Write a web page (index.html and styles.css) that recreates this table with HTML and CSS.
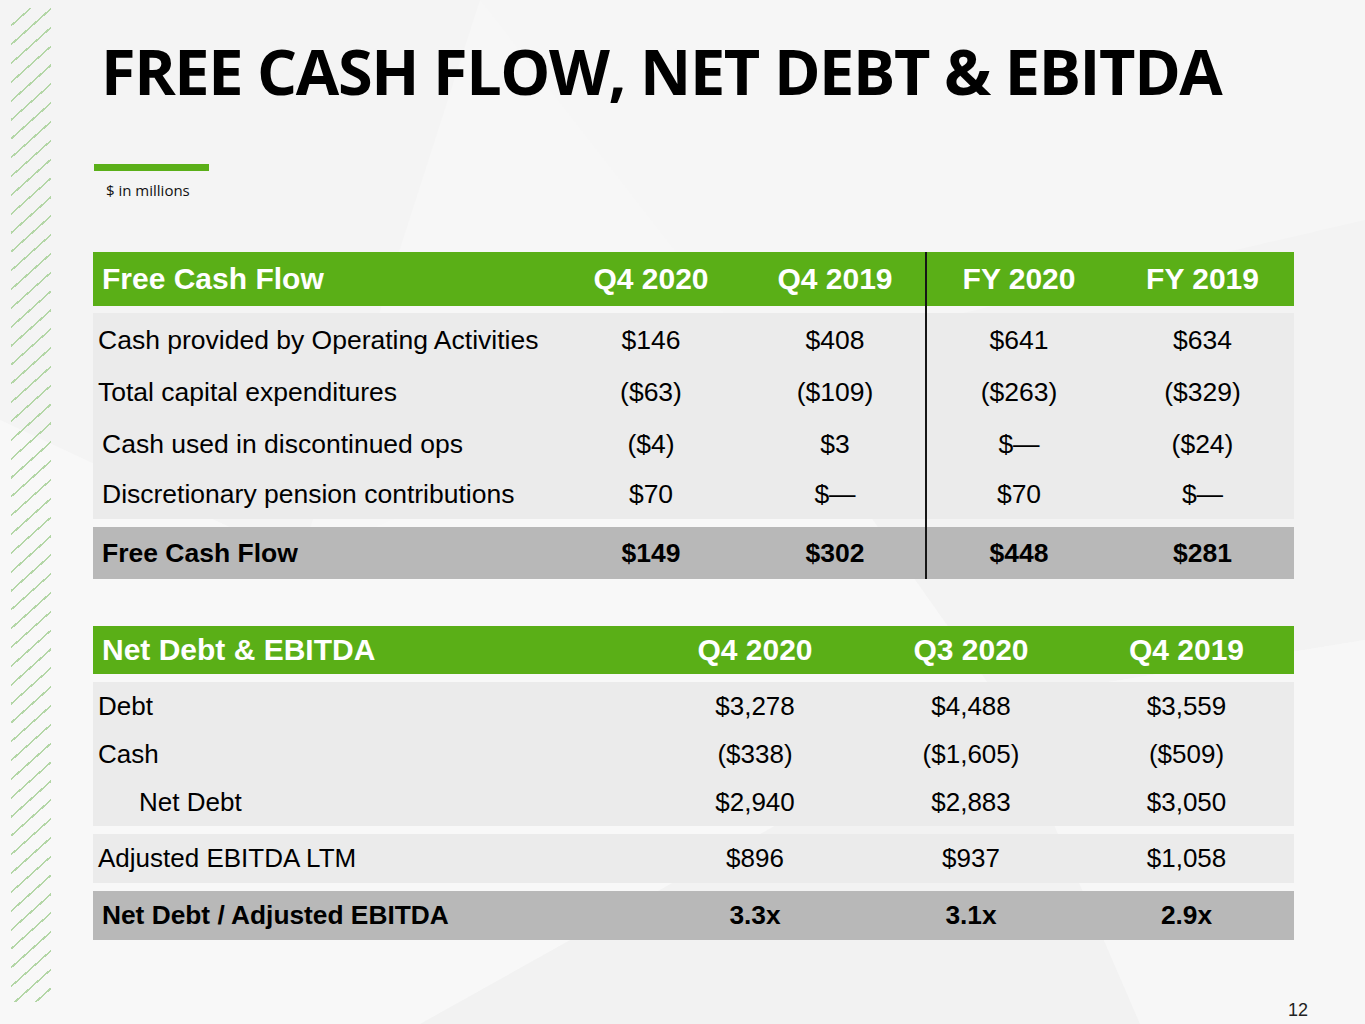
FILE: index.html
```html
<!DOCTYPE html>
<html lang="en">
<head>
<meta charset="utf-8">
<title>Free Cash Flow, Net Debt &amp; EBITDA</title>
<link rel="stylesheet" href="styles.css">
</head>
<body>
<div class="slide">
  <svg class="bg" width="1365" height="1024" viewBox="0 0 1365 1024" aria-hidden="true">
    <polygon points="0,0 480,0 300,560 0,420" fill="#f4f4f4"/>
    <polygon points="480,0 1365,0 1365,220 760,360" fill="#f6f6f6"/>
    <polygon points="300,560 760,360 1000,700 420,1024 0,1024 0,420" fill="#f8f8f8"/>
    <polygon points="760,360 1365,220 1365,640 1000,700" fill="#f3f3f3"/>
    <polygon points="1000,700 1365,640 1365,1024 1140,1024" fill="#f7f7f7"/>
    <polygon points="420,1024 1000,700 1140,1024" fill="#f2f2f2"/>
  </svg>
  <div class="stripes"></div>

  <div class="content">
    <h1 class="title">FREE CASH FLOW, NET DEBT &amp; EBITDA</h1>
    <div class="rule"></div>
    <p class="note">$ in millions</p>

    <div class="table fcf">
      <div class="divider"></div>
      <div class="row head">
        <div class="lbl">Free Cash Flow</div>
        <div class="num">Q4 2020</div>
        <div class="num">Q4 2019</div>
        <div class="num">FY 2020</div>
        <div class="num">FY 2019</div>
      </div>
      <div class="block body">
        <div class="row">
          <div class="lbl">Cash provided by Operating Activities</div>
          <div class="num">$146</div><div class="num">$408</div><div class="num">$641</div><div class="num">$634</div>
        </div>
        <div class="row">
          <div class="lbl">Total capital expenditures</div>
          <div class="num">($63)</div><div class="num">($109)</div><div class="num">($263)</div><div class="num">($329)</div>
        </div>
        <div class="row">
          <div class="lbl ind1">Cash used in discontinued ops</div>
          <div class="num">($4)</div><div class="num">$3</div><div class="num">$—</div><div class="num">($24)</div>
        </div>
        <div class="row">
          <div class="lbl ind1">Discretionary pension contributions</div>
          <div class="num">$70</div><div class="num">$—</div><div class="num">$70</div><div class="num">$—</div>
        </div>
      </div>
      <div class="row total">
        <div class="lbl">Free Cash Flow</div>
        <div class="num">$149</div><div class="num">$302</div><div class="num">$448</div><div class="num">$281</div>
      </div>
    </div>

    <div class="table nd">
      <div class="row head">
        <div class="lbl">Net Debt &amp; EBITDA</div>
        <div class="num">Q4 2020</div>
        <div class="num">Q3 2020</div>
        <div class="num">Q4 2019</div>
      </div>
      <div class="block body">
        <div class="row">
          <div class="lbl">Debt</div>
          <div class="num">$3,278</div><div class="num">$4,488</div><div class="num">$3,559</div>
        </div>
        <div class="row">
          <div class="lbl">Cash</div>
          <div class="num">($338)</div><div class="num">($1,605)</div><div class="num">($509)</div>
        </div>
        <div class="row">
          <div class="lbl ind2">Net Debt</div>
          <div class="num">$2,940</div><div class="num">$2,883</div><div class="num">$3,050</div>
        </div>
      </div>
      <div class="row single">
        <div class="lbl">Adjusted EBITDA LTM</div>
        <div class="num">$896</div><div class="num">$937</div><div class="num">$1,058</div>
      </div>
      <div class="row total">
        <div class="lbl">Net Debt / Adjusted EBITDA</div>
        <div class="num">3.3x</div><div class="num">3.1x</div><div class="num">2.9x</div>
      </div>
    </div>

    <div class="pagenum">12</div>
  </div>
</div>
</body>
</html>
```

FILE: styles.css
```css
* { box-sizing: border-box; }

html, body {
  margin: 0;
  padding: 0;
}

body {
  width: 1365px;
  height: 1024px;
  overflow: hidden;
  background: #f7f7f7;
  font-family: "Liberation Sans", Arial, sans-serif;
  color: #000;
}

.slide {
  position: relative;
  width: 1365px;
  height: 1024px;
  overflow: hidden;
}

.bg {
  position: absolute;
  left: 0;
  top: 0;
  z-index: 0;
}

.stripes {
  position: absolute;
  left: 11px;
  top: 8px;
  width: 40px;
  height: 994px;
  z-index: 1;
  background: repeating-linear-gradient(138deg,
    transparent 0, transparent 12.4px,
    #b3d6a6 12.4px, #b3d6a6 14px);
}

.content {
  position: relative;
  z-index: 2;
  padding-left: 93px;
}

.title {
  margin: 39px 0 0 8px;
  font-family: "Open Sans", "Liberation Sans", sans-serif;
  font-weight: 700;
  font-size: 63px;
  line-height: 63px;
  letter-spacing: -1.4px;
  color: #000;
}

.rule {
  margin-top: 62px;
  margin-left: 1px;
  width: 115px;
  height: 7px;
  background: #5aaf18;
}

.note {
  margin: 9px 0 0 13px;
  font-family: "Open Sans", "Liberation Sans", sans-serif;
  font-size: 15px;
  line-height: 20px;
  color: #111;
}

.table {
  position: relative;
  width: 1201px;
}

.fcf { margin-top: 52px; }
.nd { margin-top: 47px; }

.row {
  display: grid;
  align-items: center;
}

.fcf .row { grid-template-columns: 466px 184px 184px 184px 183px; }
.nd .row { grid-template-columns: 554px 216px 216px 215px; }

.num { text-align: center; }

.lbl { padding-left: 5px; white-space: nowrap; }
.lbl.ind1 { padding-left: 9px; }
.lbl.ind2 { padding-left: 46px; }

.head {
  background: #5aaf17;
  color: #fff;
  font-weight: 700;
  font-size: 30px;
}
.head .lbl { padding-left: 9px; }

.fcf .head { height: 54px; }
.nd .head { height: 48px; }

.body {
  background: #ebebeb;
  margin-top: 7px;
}

.fcf .body { padding-top: 1px; font-size: 26.5px; }
.fcf .body .row { height: 52px; }
.fcf .body .row:last-child { height: 49px; }

.nd .body { margin-top: 8px; font-size: 26px; }
.nd .body .row { height: 48px; }

.single {
  background: #ebebeb;
  margin-top: 8px;
  height: 49px;
  font-size: 26px;
}

.total {
  background: #b8b8b8;
  margin-top: 8px;
  font-weight: 700;
  font-size: 26.5px;
}
.total .lbl { padding-left: 9px; }
.fcf .total { height: 52px; }
.nd .total { height: 49px; font-size: 26.3px; }

.divider {
  position: absolute;
  left: 832px;
  top: 0;
  bottom: 0;
  width: 2px;
  background: #161616;
  z-index: 3;
}

.pagenum {
  margin-top: 60px;
  width: 1215px;
  text-align: right;
  font-size: 18px;
  line-height: 20px;
  color: #222;
}
```
